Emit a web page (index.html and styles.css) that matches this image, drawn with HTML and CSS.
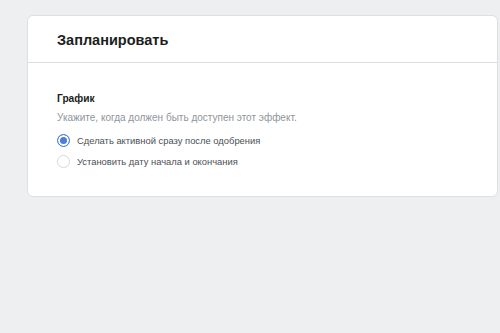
FILE: index.html
```html
<!DOCTYPE html>
<html lang="ru">
<head>
  <meta charset="UTF-8">
  <title>Запланировать</title>
  <link rel="stylesheet" href="styles.css">
</head>
<body>
  <div class="card">
    <div class="card-header">
      <h2>Запланировать</h2>
    </div>
    <div class="card-body">
      <h4>График</h4>
      <p class="hint">Укажите, когда должен быть доступен этот эффект.</p>
      <label class="option">
        <span class="radio checked"></span>
        Сделать активной сразу после одобрения
      </label>
      <label class="option">
        <span class="radio"></span>
        Установить дату начала и окончания
      </label>
    </div>
  </div>
</body>
</html>
```

FILE: styles.css
```css
body {
  margin: 0;
  padding: 15px 2px 0 27px;
  font-family: "Liberation Sans", Arial, sans-serif;
  background-color: #eeeff1;
  color: #1c1e21;
}
.card {
  background: white;
  border: 1px solid #dddfe2;
  border-radius: 6px;
  height: 182px;
  box-sizing: border-box;
}
.card-header {
  padding: 14px 29px 12px;
  border-bottom: 1px solid #dadde1;
}
.card-header h2 {
  margin: 0;
  font-size: 14.5px;
  line-height: 20px;
  font-weight: bold;
}
.card-body {
  padding: 29px 29px 0;
}
.card-body h4 {
  margin: 0;
  font-size: 10.2px;
  line-height: 14px;
  font-weight: bold;
}
.hint {
  margin: 4px 0 4px;
  font-size: 10px;
  line-height: 16px;
  color: #90949c;
}
.option {
  display: flex;
  align-items: center;
  gap: 7px;
  height: 21px;
  font-size: 9.4px;
  color: #4b4f56;
}
.radio {
  width: 13px;
  height: 13px;
  box-sizing: border-box;
  border: 1px solid #d5d8dc;
  border-radius: 50%;
  background: white;
}
.radio.checked {
  border-color: #4a7ed8;
  background: #4a7ed8;
  box-shadow: inset 0 0 0 2px white;
}
```
